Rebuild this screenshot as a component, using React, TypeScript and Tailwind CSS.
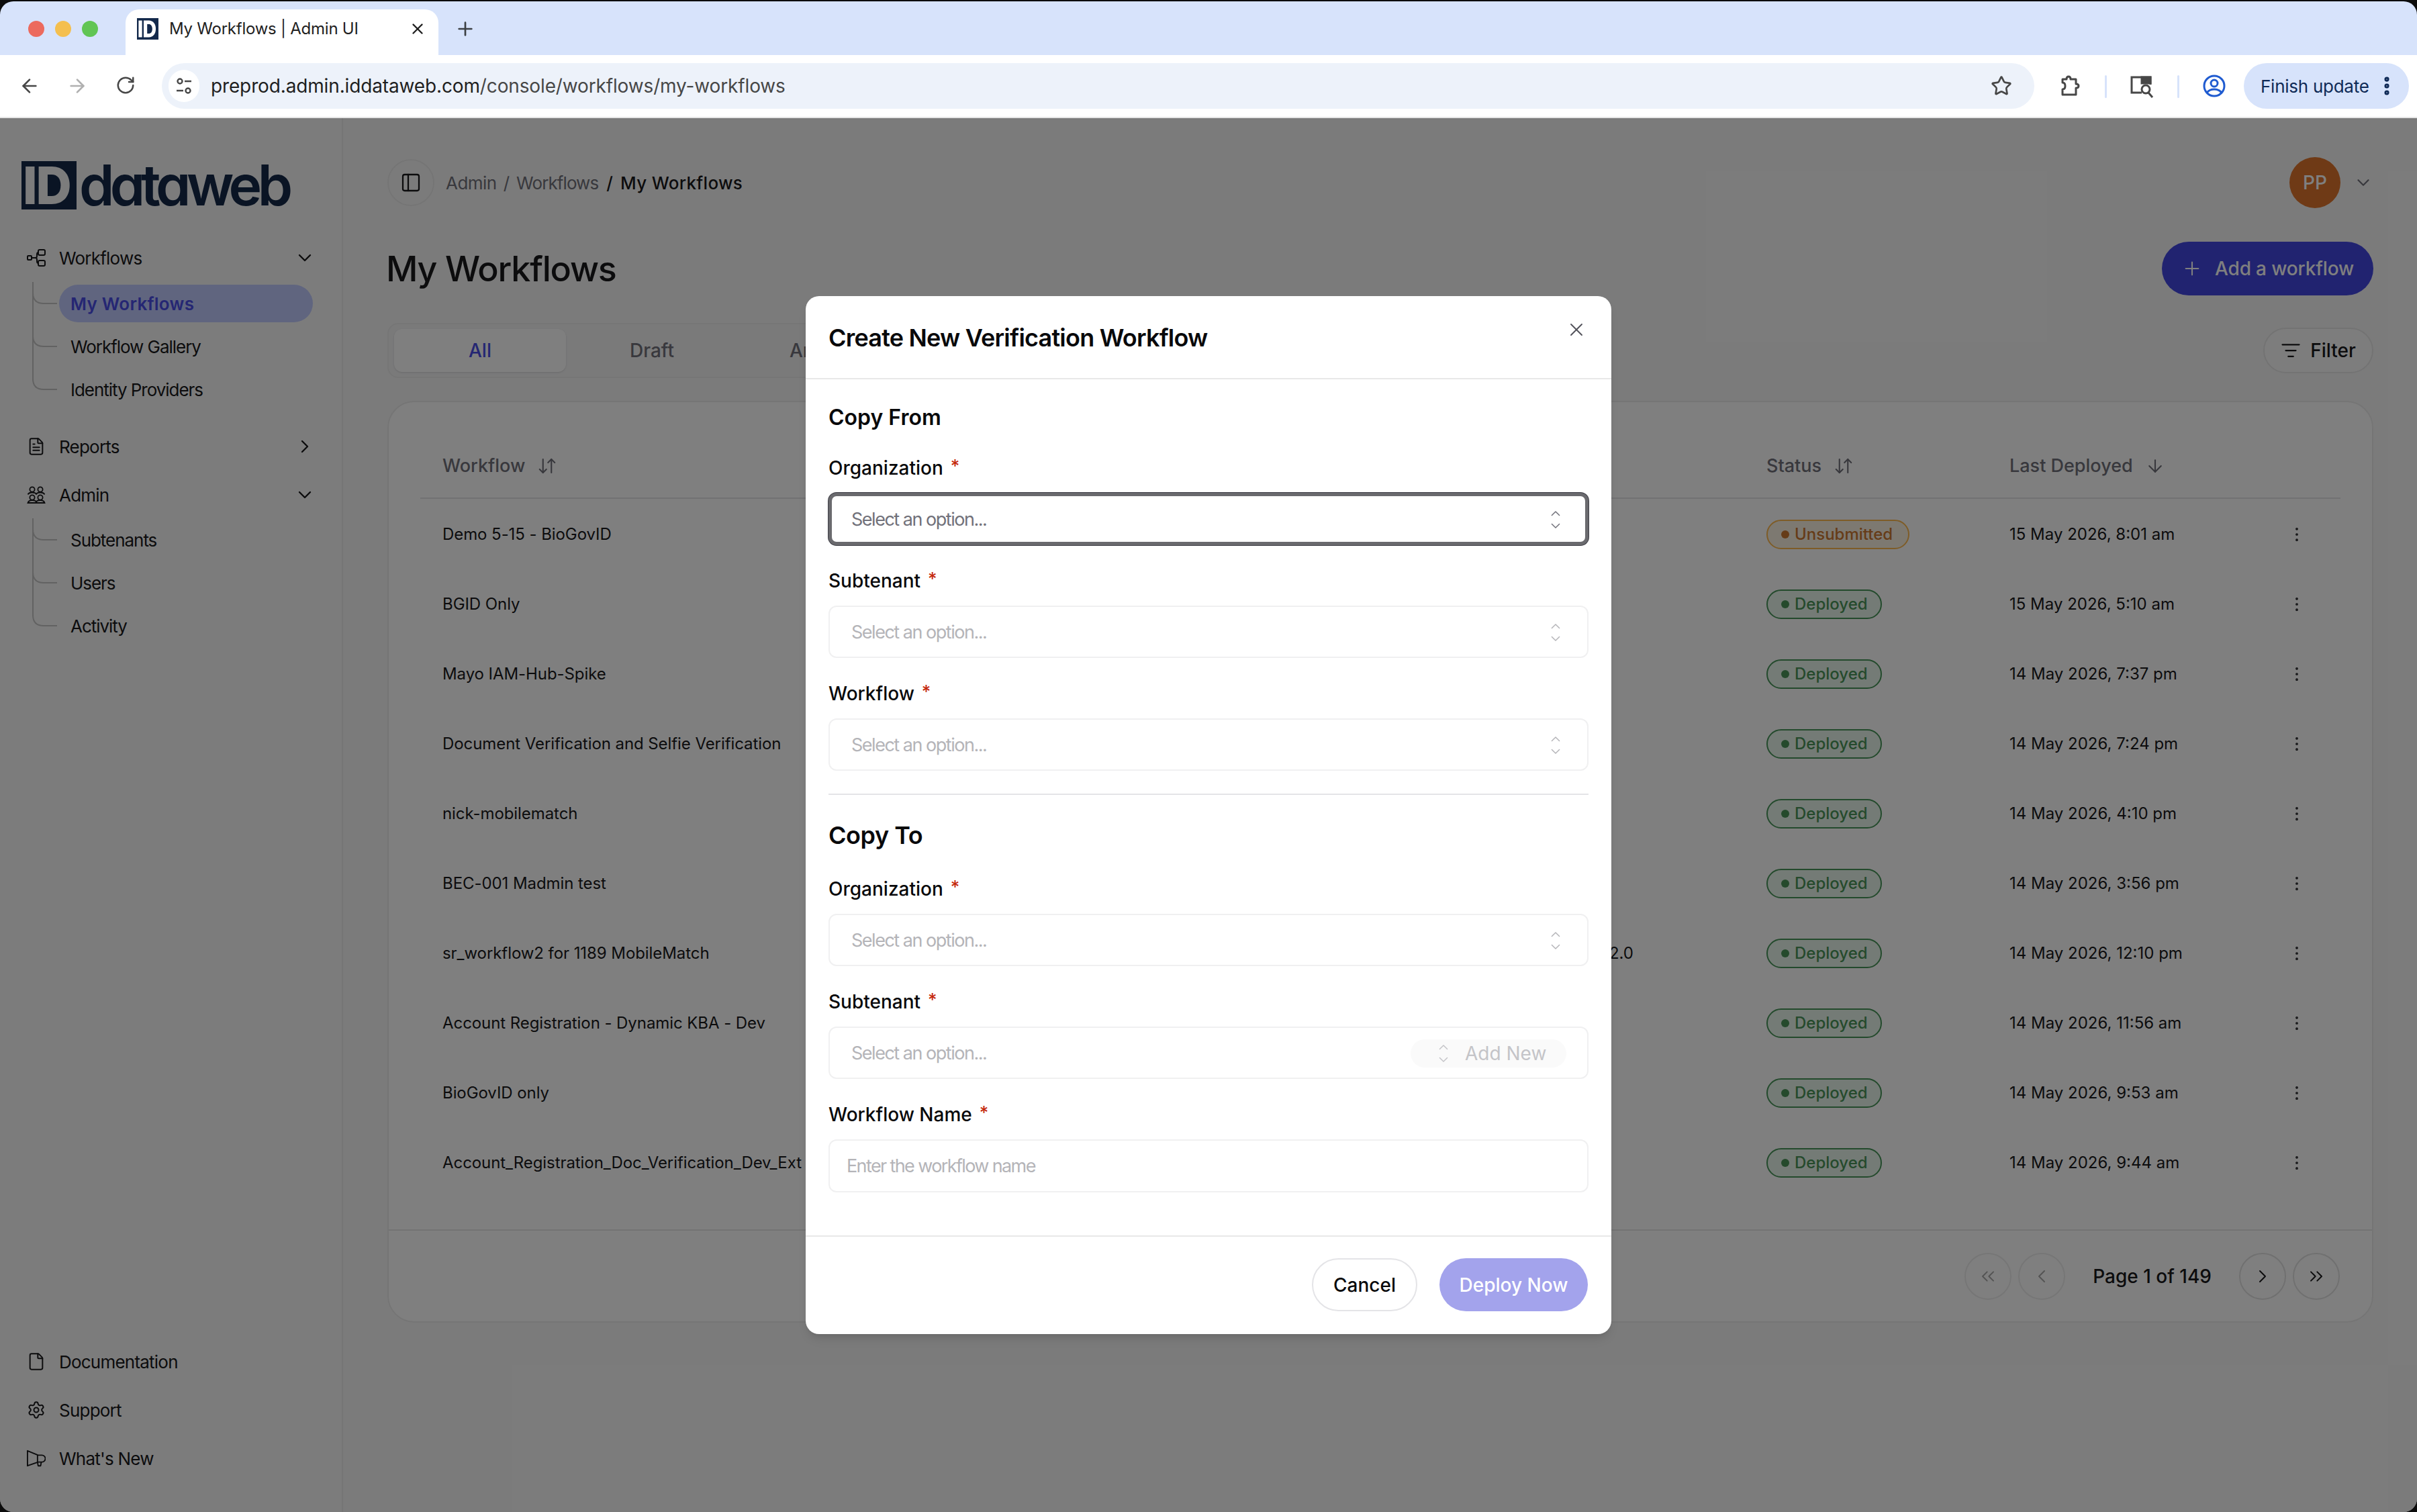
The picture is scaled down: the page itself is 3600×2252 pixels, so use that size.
import {
  ArrowDown,
  ArrowDownUp,
  ArrowLeft,
  ArrowRight,
  ChevronDown,
  ChevronLeft,
  ChevronRight,
  ChevronsLeft,
  ChevronsRight,
  EllipsisVertical,
  File,
  FileText,
  ListFilter,
  PanelLeft,
  Plus,
  RotateCw,
  Settings,
  Star,
  X,
} from 'lucide-react'

const rows = [
  { name: 'Demo 5-15 - BioGovID', status: 'Unsubmitted', date: '15 May 2026, 8:01 am' },
  { name: 'BGID Only', status: 'Deployed', date: '15 May 2026, 5:10 am' },
  { name: 'Mayo IAM-Hub-Spike', status: 'Deployed', date: '14 May 2026, 7:37 pm' },
  { name: 'Document Verification and Selfie Verification', status: 'Deployed', date: '14 May 2026, 7:24 pm' },
  { name: 'nick-mobilematch', status: 'Deployed', date: '14 May 2026, 4:10 pm' },
  { name: 'BEC-001 Madmin test', status: 'Deployed', date: '14 May 2026, 3:56 pm' },
  { name: 'sr_workflow2 for 1189 MobileMatch', status: 'Deployed', date: '14 May 2026, 12:10 pm', note: 'MobileMatch v2.0' },
  { name: 'Account Registration - Dynamic KBA - Dev', status: 'Deployed', date: '14 May 2026, 11:56 am' },
  { name: 'BioGovID only', status: 'Deployed', date: '14 May 2026, 9:53 am' },
  { name: 'Account_Registration_Doc_Verification_Dev_Ext', status: 'Deployed', date: '14 May 2026, 9:44 am' },
]

function IdMark({ className }: { className: string }) {
  return (
    <svg className={className} viewBox="0 0 80 72" preserveAspectRatio="none">
      <rect fill="#142848" height="72" width="80" />
      <rect fill="#f8f8f8" height="56" width="13" x="6" y="8" />
      <path d="M25 8h19c16 0 26 11 26 28S60 64 44 64H25z" fill="#f8f8f8" />
      <path d="M38 20h6c8 0 13 6 13 16s-5 16-13 16h-6z" fill="#142848" />
    </svg>
  )
}

function WorkflowsIcon() {
  return (
    <svg className="h-[28px] w-[28px]" fill="none" stroke="currentColor" strokeWidth="2" viewBox="0 0 28 28">
      <rect height="6" rx="1" width="6" x="1" y="11" />
      <path d="M7 14h6M13 14c2 0 2-2 2-3v-2c0-1 0-3 2-3M13 14c2 0 2 2 2 3v2c0 1 0 3 2 3" />
      <rect height="8" rx="2" width="10" x="17" y="2" />
      <rect height="8" rx="2" width="10" x="17" y="18" />
    </svg>
  )
}

function AdminIcon() {
  return (
    <svg className="h-[28px] w-[28px]" fill="none" stroke="currentColor" strokeWidth="1.8" viewBox="0 0 28 28">
      <circle cx="8" cy="6" r="3.6" />
      <circle cx="20" cy="6" r="3.6" />
      <circle cx="8" cy="18" r="3.6" />
      <circle cx="20" cy="18" r="3.6" />
      <path d="M1.5 13.5c1-2 3-3 6.500-3s5.500 1 6 3c.5-2 2.500-3 6-3s5.500 1 6.500 3" />
      <path d="M1.500 26c1-3 3-4 6.500-4s5.500 1 6 3c.5-2 2.500-3 6-3s5.500 1 6.500 4z" />
    </svg>
  )
}

function MegaphoneIcon() {
  return (
    <svg className="h-[28px] w-[30px]" fill="none" stroke="currentColor" strokeLinejoin="round" strokeWidth="2" viewBox="0 0 30 28">
      <path d="M1 2v24l17-6h6a5 5 0 0 0 0-11h-6L1 2z" />
      <path d="M17 9v11M17 20l1 6h4l1-6" />
    </svg>
  )
}

function UpDownIcon({ className }: { className: string }) {
  return (
    <svg className={className} fill="none" stroke="currentColor" strokeLinecap="round" strokeLinejoin="round" strokeWidth="1.6" viewBox="0 0 16 28">
      <path d="M2 7l6-6 6 6M2 21l6 6 6-6" />
    </svg>
  )
}

function NavItem({ icon, label, chevron }: { icon: React.ReactNode; label: string; chevron?: 'down' | 'right' }) {
  return (
    <div className="flex h-[56px] w-[470px] items-center pl-[40px] text-[#18181b]">
      <span className="flex w-[28px] justify-center">{icon}</span>
      <span className="ml-[20px] text-[26px] tracking-[-0.03em]">{label}</span>
      {chevron === 'down' ? <ChevronDown className="ml-auto" size={32} strokeWidth={1.8} /> : null}
      {chevron === 'right' ? <ChevronRight className="ml-auto" size={32} strokeWidth={1.8} /> : null}
    </div>
  )
}

function SubItem({ label, active, last }: { label: string; active?: boolean; last?: boolean }) {
  return (
    <div className="ml-[47px] flex h-[64px] items-center">
      <svg className="h-[64px] w-[40px] shrink-0" fill="none" stroke="#c4c4c4" strokeWidth="2" viewBox="0 0 40 64">
        <path d={last ? 'M2 0v16q0 16 16 16h20' : 'M2 0v64M2 16q0 16 16 16h20'} />
      </svg>
      <div
        className={
          active
            ? 'ml-[1px] flex h-[56px] w-[378px] items-center rounded-full bg-[#c0cbff] pl-[17px] text-[26px] font-semibold tracking-[0.01em] text-[#4a4de6]'
            : 'ml-[1px] flex h-[56px] w-[378px] items-center pl-[17px] text-[26px] tracking-[-0.04em] text-[#18181b]'
        }
      >
        {label}
      </div>
    </div>
  )
}

function Sidebar() {
  return (
    <aside className="flex w-[511px] shrink-0 flex-col border-r-2 border-[#ebebeb] bg-[#f9f9f9]">
      <div className="mt-[64px] flex h-[72px] items-center pl-[32px]">
        <IdMark className="h-[72px] w-[82px]" />
        <span className="ml-[4px] text-[84px] leading-none font-semibold tracking-[-0.078em] text-[#142848] [font-feature-settings:'cv11']">
          dataweb
        </span>
      </div>
      <div className="mt-[44px]">
        <NavItem chevron="down" icon={<WorkflowsIcon />} label="Workflows" />
      </div>
      <div className="mt-[8px]">
        <SubItem active label="My Workflows" />
        <SubItem label="Workflow Gallery" />
        <SubItem label="Identity Providers" last />
      </div>
      <div className="mt-[25px]">
        <NavItem chevron="right" icon={<FileText size={28} strokeWidth={1.7} />} label="Reports" />
      </div>
      <div className="mt-[16px]">
        <NavItem chevron="down" icon={<AdminIcon />} label="Admin" />
      </div>
      <div className="mt-[7px]">
        <SubItem label="Subtenants" />
        <SubItem label="Users" />
        <SubItem label="Activity" last />
      </div>
      <div className="mt-auto flex flex-col gap-[16px] pb-[52px]">
        <NavItem icon={<File size={28} strokeWidth={1.7} />} label="Documentation" />
        <NavItem icon={<Settings size={28} strokeWidth={1.7} />} label="Support" />
        <NavItem icon={<MegaphoneIcon />} label="What's New" />
      </div>
    </aside>
  )
}

function StatusBadge({ status }: { status: string }) {
  const isDeployed = status === 'Deployed'
  return (
    <span
      className={
        isDeployed
          ? 'flex h-[44px] items-center gap-[8px] rounded-full border-2 border-[#469458] bg-[#e9f7ec] pr-[19px] pl-[20px] text-[24px] font-medium text-[#4a9459]'
          : 'flex h-[44px] items-center gap-[8px] rounded-full border-2 border-[#fcb84e] bg-[#fbf3e3] pr-[23px] pl-[20px] text-[24px] font-medium text-[#cc7830]'
      }
    >
      <span className={isDeployed ? 'h-[12px] w-[12px] rounded-full bg-[#4a9459]' : 'h-[12px] w-[12px] rounded-full bg-[#cc7830]'} />
      {status}
    </span>
  )
}

function PageButton({ children, disabled }: { children: React.ReactNode; disabled?: boolean }) {
  return (
    <span
      className={
        disabled
          ? 'flex h-[70px] w-[70px] items-center justify-center rounded-full border-2 border-[#ececec] text-[#a8a8a8]'
          : 'flex h-[70px] w-[70px] items-center justify-center rounded-full border-2 border-[#e0e0e0] text-[#18181b]'
      }
    >
      {children}
    </span>
  )
}

function WorkflowTable() {
  return (
    <section className="mt-[34px] rounded-[40px] border-2 border-[#ebebeb] bg-white">
      <div className="px-[47px] pt-[46px] pb-[48px]">
        <div className="grid h-[98px] grid-cols-[1972px_362px_428px_98px] items-center border-b-2 border-[#e4e4e7] pt-[2px] text-[27px] font-medium text-[#71717a]">
          <span className="flex items-center gap-[18px] pl-[33px]">
            Workflow <ArrowDownUp size={30} strokeWidth={1.7} />
          </span>
          <span className="flex items-center gap-[18px] pl-[33px]">
            Status <ArrowDownUp size={30} strokeWidth={1.7} />
          </span>
          <span className="flex items-center gap-[18px] pl-[33px]">
            Last Deployed <ArrowDown size={30} strokeWidth={1.7} />
          </span>
          <span />
        </div>
        {rows.map((row) => (
          <div className="grid h-[104px] grid-cols-[1972px_362px_428px_98px] items-center pt-[2px] text-[24px] text-[#18181b]" key={row.name}>
            <span className="flex items-center justify-between pr-[165px] pl-[33px]">
              <span className="tracking-[-0.003em]">{row.name}</span>
              {row.note ? <span>{row.note}</span> : null}
            </span>
            <span className="flex pl-[33px]">
              <StatusBadge status={row.status} />
            </span>
            <span className="pl-[33px]">{row.date}</span>
            <EllipsisVertical className="ml-[19px]" size={28} strokeWidth={1.2} />
          </div>
        ))}
      </div>
      <div className="flex items-center justify-end gap-[10px] border-t-2 border-[#e6e6e6] pt-[33px] pr-[48px] pb-[32px]">
        <PageButton disabled>
          <ChevronsLeft size={32} strokeWidth={1.5} />
        </PageButton>
        <PageButton disabled>
          <ChevronLeft size={32} strokeWidth={1.5} />
        </PageButton>
        <span className="mx-[31px] text-[28px] font-medium text-[#18181b]">Page 1 of 149</span>
        <PageButton>
          <ChevronRight size={32} strokeWidth={1.5} />
        </PageButton>
        <PageButton>
          <ChevronsRight size={32} strokeWidth={1.5} />
        </PageButton>
      </div>
    </section>
  )
}

function Main() {
  return (
    <main className="flex min-w-0 flex-1 flex-col bg-[#f7f7f7] pr-[65px] pl-[66px]">
      <div className="mt-[61px] flex h-[70px] items-center">
        <span className="flex h-[70px] w-[70px] items-center justify-center rounded-full border-2 border-[#ebebeb] text-[#18181b]">
          <PanelLeft size={32} strokeWidth={1.7} />
        </span>
        <span className="ml-[17px] text-[26px] tracking-[-0.02em] text-[#71717a]">Admin</span>
        <span className="ml-[10px] text-[26px] text-[#71717a]">/</span>
        <span className="ml-[10px] text-[26px] tracking-[-0.035em] text-[#71717a]">Workflows</span>
        <span className="ml-[12px] text-[26px] font-medium text-[#18181b]">/</span>
        <span className="ml-[11px] text-[26px] font-medium tracking-[0.012em] text-[#18181b]">My Workflows</span>
        <span className="mr-[19px] ml-auto flex h-[76px] w-[76px] items-center justify-center rounded-full bg-[#de742c] text-[28px] font-medium text-white">
          PP
        </span>
        <ChevronDown className="text-[#71717a]" size={30} strokeWidth={1.8} />
      </div>
      <div className="mt-[53px] flex h-[80px] items-center justify-between pt-[2px]">
        <h1 className="ml-[-2px] text-[52px] font-medium tracking-[-0.023em] text-[#18181b]">My Workflows</h1>
        <span className="mt-[-2px] flex h-[80px] w-[315px] items-center justify-center gap-[18px] rounded-full bg-[#4246e0] text-[28px] font-medium tracking-[-0.005em] text-white">
          <Plus size={32} strokeWidth={1.6} />
          Add a workflow
        </span>
      </div>
      <div className="mt-[41px] flex h-[82px] items-center justify-between">
        <div className="flex h-[82px] w-[1000px] items-center rounded-[16px] border-2 border-[#ececec] bg-[#f4f4f5] pl-[8px] text-[28px] font-medium text-[#71717a]">
          <span className="flex h-[64px] w-[256px] items-center justify-center rounded-[12px] bg-white text-[#4a4de6] shadow-sm">All</span>
          <span className="flex h-[64px] w-[256px] items-center justify-center">Draft</span>
          <span className="flex h-[64px] w-[256px] items-center justify-center">Archive</span>
        </div>
        <span className="flex h-[68px] w-[164px] items-center justify-center gap-[14px] rounded-full border-2 border-[#e6e6e6] bg-[#fafafa] text-[28px] font-medium text-[#18181b]">
          <ListFilter size={30} strokeWidth={1.8} />
          Filter
        </span>
      </div>
      <WorkflowTable />
    </main>
  )
}

function Field({ label, children }: { label: string; children: React.ReactNode }) {
  return (
    <div className="mt-[35px] flex flex-col gap-[19px]">
      <div className="flex h-[36px] items-center gap-[11px] text-[28px] leading-none font-medium text-[#09090b]">
        {label}
        <span className="mb-[6px] text-[26px] text-[#c5280c]">*</span>
      </div>
      {children}
    </div>
  )
}

function SelectBox({ focused, addNew }: { focused?: boolean; addNew?: boolean }) {
  return (
    <div
      className={
        focused
          ? 'flex h-[78px] items-center rounded-[12px] border-[5px] border-[#6a6a6e] bg-white pt-[2px] pr-[36px] pl-[29px] text-[27px] tracking-[-0.055em] text-[#71717a] shadow-[0_0_0_1px_#3f3f46]'
          : 'flex h-[78px] items-center rounded-[12px] border-2 border-[#f0f0f1] bg-white pt-[2px] pr-[39px] pl-[32px] text-[27px] tracking-[-0.055em] text-[#b4b4b8]'
      }
    >
      Select an option...
      {addNew ? (
        <span className="mr-[-8px] ml-auto flex h-[42px] w-[232px] items-center rounded-full bg-[#fafafa] pl-[41px] text-[28px] font-normal tracking-normal text-[#c4c4c8]">
          <UpDownIcon className="h-[26px] w-[16px]" />
          <span className="ml-[24px]">Add New</span>
        </span>
      ) : (
        <UpDownIcon className="ml-auto h-[26px] w-[16px]" />
      )}
    </div>
  )
}

function Modal() {
  return (
    <div className="absolute inset-x-0 top-[174px] bottom-0 flex items-start justify-center bg-black/50 pt-[265px]">
      <div className="w-[1200px] rounded-[20px] bg-white shadow-lg">
        <div className="flex h-[124px] items-start justify-between border-b-2 border-[#e8e8e8] pt-[40px] pr-[36px] pl-[34px]">
          <h2 className="text-[36px] leading-[44px] font-semibold tracking-[-0.022em] text-[#09090b]">Create New Verification Workflow</h2>
          <X className="mt-[-6px] text-[#52525b]" size={32} strokeWidth={1.4} />
        </div>
        <div className="px-[34px]">
          <h3 className="mt-[37px] text-[32px] leading-[40px] font-semibold text-[#09090b]">Copy From</h3>
          <div className="mt-[2px] flex flex-col">
            <Field label="Organization">
              <SelectBox focused />
            </Field>
            <Field label="Subtenant">
              <SelectBox />
            </Field>
            <Field label="Workflow">
              <SelectBox />
            </Field>
          </div>
          <div className="mt-[34px] h-[2px] bg-[#e4e4e7]" />
          <h3 className="mt-[38px] text-[36px] leading-[44px] font-semibold tracking-[-0.012em] text-[#09090b]">Copy To</h3>
          <div className="mt-[5px] flex flex-col">
            <Field label="Organization">
              <SelectBox />
            </Field>
            <Field label="Subtenant">
              <SelectBox addNew />
            </Field>
            <Field label="Workflow Name">
              <div className="flex h-[79px] items-center rounded-[12px] border-2 border-[#f0f0f1] pt-[2px] pl-[25px] text-[27px] tracking-[-0.06em] text-[#b4b4b8]">
                Enter the workflow name
              </div>
            </Field>
          </div>
        </div>
        <div className="mt-[64px] flex justify-end gap-[33px] border-t-2 border-[#e8e8e8] pt-[32px] pr-[35px] pb-[34px]">
          <span className="flex h-[79px] w-[157px] items-center justify-center rounded-full border-2 border-[#e4e4e7] text-[28px] font-medium text-[#09090b]">
            Cancel
          </span>
          <span className="flex h-[79px] w-[221px] items-center justify-center rounded-full bg-[#a3a3ec] text-[28px] font-medium text-white">
            Deploy Now
          </span>
        </div>
      </div>
    </div>
  )
}

function BrowserChrome() {
  return (
    <header className="shrink-0">
      <div className="flex h-[80px] items-end bg-[#d7e3fb]">
        <div className="mb-[27px] ml-[42px] flex gap-[16px]">
          <span className="h-[24px] w-[24px] rounded-full bg-[#ec6a5e]" />
          <span className="h-[24px] w-[24px] rounded-full bg-[#f4bf4f]" />
          <span className="h-[24px] w-[24px] rounded-full bg-[#61c554]" />
        </div>
        <div className="ml-[41px] flex h-[68px] w-[466px] items-center rounded-t-[20px] bg-white pb-[10px] pl-[17px] text-[#1f1f1f]">
          <svg className="h-[32px] w-[32px]" viewBox="0 0 80 72" preserveAspectRatio="none">
            <rect fill="#13294b" height="72" width="80" />
            <rect fill="#fff" height="56" width="13" x="6" y="8" />
            <path d="M25 8h19c16 0 26 11 26 28S60 64 44 64H25z" fill="#fff" />
            <path d="M38 20h6c8 0 13 6 13 16s-5 16-13 16h-6z" fill="#13294b" />
          </svg>
          <span className="ml-[16px] text-[24px] tracking-[-0.01em]">My Workflows | Admin UI</span>
          <X className="mr-[18px] ml-auto" size={26} strokeWidth={2.2} />
        </div>
        <Plus className="mb-[23px] ml-[24px] text-[#3c4043]" size={32} strokeWidth={2} />
      </div>
      <div className="flex h-[94px] items-start border-b-2 border-[#e6e6e6] bg-white pt-[12px] text-[#474747]">
        <ArrowLeft className="mt-[18px] ml-[28px]" size={32} strokeWidth={2} />
        <ArrowRight className="mt-[18px] ml-[39px] text-[#b0b0b0]" size={32} strokeWidth={2} />
        <RotateCw className="mt-[18px] ml-[41px]" size={30} strokeWidth={2} />
        <div className="ml-[39px] flex h-[68px] w-[2789px] items-center rounded-full bg-[#edf2fa] pl-[10px]">
          <span className="flex h-[48px] w-[46px] items-center justify-center rounded-full bg-white">
            <svg className="h-[28px] w-[28px]" fill="none" stroke="#474747" strokeWidth="2.4" viewBox="0 0 28 28">
              <circle cx="8" cy="7" r="3.500" />
              <path d="M15 7h10M3 21h10" />
              <circle cx="20" cy="21" r="3.500" />
            </svg>
          </span>
          <span className="ml-[17px] text-[28px] tracking-[-0.005em] text-[#1f1f1f]">
            preprod.admin.iddataweb.com<span className="text-[#474747]">/console/workflows/my-workflows</span>
          </span>
          <Star className="mr-[33px] ml-auto" size={32} strokeWidth={2} />
        </div>
        <svg className="mt-[18px] ml-[37px] h-[32px] w-[32px]" fill="none" stroke="#474747" strokeLinejoin="round" strokeWidth="3" viewBox="0 0 32 32">
          <path d="M5 6h6c0-3 1-4 3-4s3 1 3 4h8v7c3 0 4 1 4 3s-1 3-4 3v10H5v-8c3 0 4-2 4-5s-1-5-4-5z" />
        </svg>
        <span className="mt-[18px] ml-[36px] h-[34px] w-[3px] rounded-full bg-[#d7e3fb]" />
        <svg className="mt-[18px] ml-[34px] h-[34px] w-[36px]" fill="none" stroke="#474747" strokeWidth="3" viewBox="0 0 36 34">
          <path d="M18 26H3V3h28v11" />
          <path d="M18 3h13v9H18z" fill="#474747" />
          <circle cx="24" cy="21" r="6" />
          <path d="M28 26l6 7" />
        </svg>
        <span className="mt-[18px] ml-[35px] h-[34px] w-[3px] rounded-full bg-[#d7e3fb]" />
        <svg className="mt-[17px] ml-[35px] h-[34px] w-[34px]" fill="none" stroke="#1f5bd0" strokeWidth="3" viewBox="0 0 34 34">
          <circle cx="17" cy="17" r="15" />
          <circle cx="17" cy="13" r="5" />
          <path d="M6 27c3-4 7-5 11-5s8 1 11 5" />
        </svg>
        <div className="ml-[27px] flex h-[68px] w-[246px] items-center rounded-full bg-[#d7e3fb] pl-[25px] text-[#0f2a56]">
          <span className="text-[26px] tracking-[-0.01em]">Finish update</span>
          <EllipsisVertical className="ml-[9px]" size={34} strokeWidth={3} />
        </div>
      </div>
    </header>
  )
}

export default function App() {
  return (
    <div className="h-[2252px] w-[3600px] overflow-hidden bg-[#0c0c0c] pt-[2px] font-['Inter',sans-serif]">
      <div className="relative flex h-[2250px] flex-col overflow-hidden rounded-[20px]">
        <BrowserChrome />
        <div className="flex min-h-0 flex-1">
          <Sidebar />
          <Main />
        </div>
        <Modal />
      </div>
    </div>
  )
}
